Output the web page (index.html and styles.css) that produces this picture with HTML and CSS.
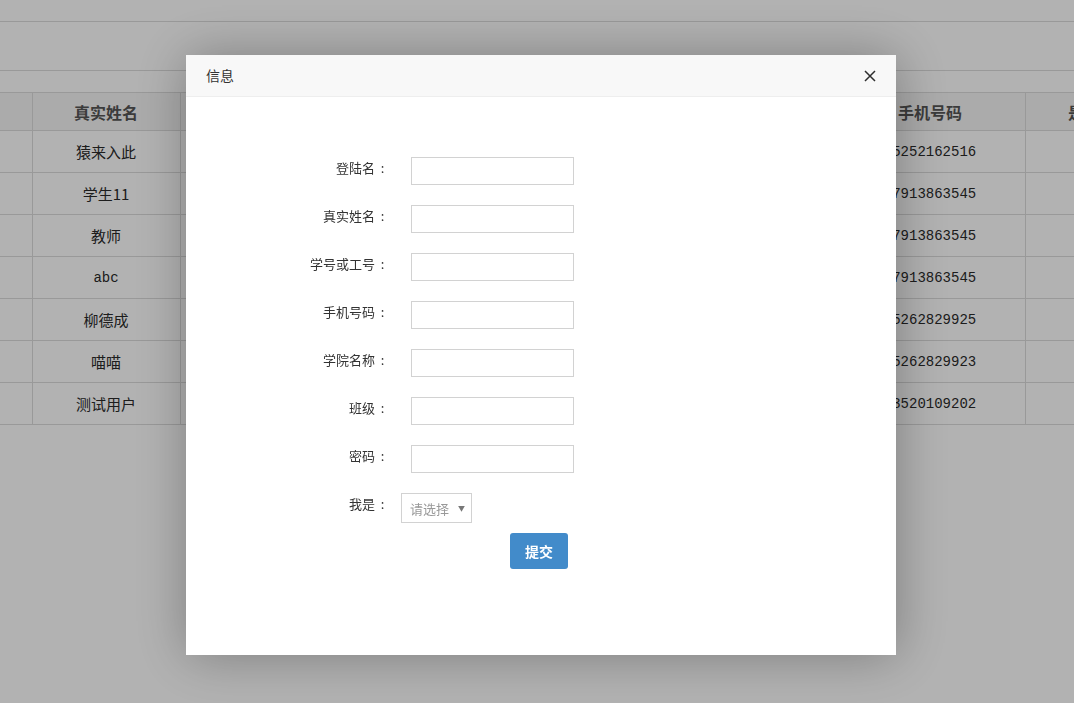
FILE: index.html
```html
<!DOCTYPE html>
<html lang="zh-CN">
<head>
<meta charset="utf-8">
<title>用户管理</title>
<link rel="stylesheet" href="styles.css">
</head>
<body>
<div class="page">
  <div class="topbar"></div>
  <div class="toolbar"></div>
  <table class="grid">
    <colgroup>
      <col class="c1"><col class="c2"><col class="c3"><col class="c4"><col class="c5"><col class="c6"><col class="c7">
    </colgroup>
    <thead>
      <tr><th></th><th>真实姓名</th><th>学号/工号</th><th>学院</th><th>班级</th><th>手机号码</th><th>是否审核</th></tr>
    </thead>
    <tbody>
      <tr><td></td><td>猿来入此</td><td class="num">2017001</td><td>计算机学院</td><td>111</td><td class="num">15252162516</td><td></td></tr>
      <tr><td></td><td>学生11</td><td class="num">2017002</td><td>计算机学院</td><td>111</td><td class="num">17913863545</td><td></td></tr>
      <tr><td></td><td>教师</td><td class="num">2017003</td><td>计算机学院</td><td>111</td><td class="num">17913863545</td><td></td></tr>
      <tr><td></td><td class="num">abc</td><td class="num">2017004</td><td>计算机学院</td><td>111</td><td class="num">17913863545</td><td></td></tr>
      <tr><td></td><td>柳德成</td><td class="num">2017005</td><td>计算机学院</td><td>111</td><td class="num">15262829925</td><td></td></tr>
      <tr><td></td><td>喵喵</td><td class="num">2017006</td><td>计算机学院</td><td>111</td><td class="num">15262829923</td><td></td></tr>
      <tr><td></td><td>测试用户</td><td class="num">2017007</td><td>计算机学院</td><td>111</td><td class="num">13520109202</td><td></td></tr>
    </tbody>
  </table>
</div>

<div class="shade"></div>

<div class="layer">
  <div class="layer-title">
    <span>信息</span>
    <svg class="close" width="12" height="12" viewBox="0 0 12 12" aria-hidden="true">
      <path d="M1 1 L11 11 M11 1 L1 11" stroke="#2e2e2e" stroke-width="1.5" fill="none"/>
    </svg>
  </div>
  <div class="layer-body">
    <form class="form">
      <div class="row"><label class="lbl">登陆名<span class="colon">:</span></label><input class="inp" type="text"></div>
      <div class="row"><label class="lbl">真实姓名<span class="colon">:</span></label><input class="inp" type="text"></div>
      <div class="row"><label class="lbl">学号或工号<span class="colon">:</span></label><input class="inp" type="text"></div>
      <div class="row"><label class="lbl">手机号码<span class="colon">:</span></label><input class="inp" type="text"></div>
      <div class="row"><label class="lbl">学院名称<span class="colon">:</span></label><input class="inp" type="text"></div>
      <div class="row"><label class="lbl">班级<span class="colon">:</span></label><input class="inp" type="text"></div>
      <div class="row"><label class="lbl">密码<span class="colon">:</span></label><input class="inp" type="password"></div>
      <div class="row row-sel">
        <label class="lbl">我是<span class="colon">:</span></label>
        <div class="sel"><span class="sel-text">请选择</span><span class="sel-arrow">▼</span></div>
      </div>
      <div class="actions"><button type="button" class="btn">提交</button></div>
    </form>
  </div>
</div>
</body>
</html>
```

FILE: styles.css
```css
html, body {
  margin: 0;
  padding: 0;
  width: 1074px;
  height: 703px;
  overflow: hidden;
  background: #ffffff;
  font-family: "Noto Sans CJK SC", "Noto Sans", sans-serif;
}

.page {
  width: 1074px;
}

.topbar {
  height: 21px;
  border-bottom: 1px solid #dbdbdb;
}

.toolbar {
  height: 48px;
  border-bottom: 1px solid #dbdbdb;
  margin-bottom: 21px;
}

.grid {
  border-collapse: collapse;
  table-layout: fixed;
  width: 1175px;
}

.grid .c1 { width: 32px; }
.grid .c2 { width: 148px; }
.grid .c3 { width: 176px; }
.grid .c4 { width: 324px; }
.grid .c5 { width: 155px; }
.grid .c6 { width: 190px; }
.grid .c7 { width: 150px; }

.grid th,
.grid td {
  border: 1px solid #dbdbdb;
  text-align: center;
  padding: 0;
  white-space: nowrap;
  overflow: hidden;
}

.grid th:first-child,
.grid td:first-child {
  border-left: none;
}

.grid th {
  height: 37px;
  background: #f5f5f5;
  color: #555555;
  font-size: 16px;
  font-weight: bold;
}

.grid td {
  height: 41px;
  color: #2a2a2a;
  font-size: 15px;
}

.grid td.num {
  font-family: "Liberation Mono", "Noto Sans CJK SC", monospace;
  font-size: 14px;
}

.shade {
  position: fixed;
  inset: 0;
  background: rgba(0, 0, 0, 0.3);
}

.layer {
  position: fixed;
  left: 186px;
  top: 55px;
  width: 710px;
  height: 600px;
  background: #ffffff;
  box-shadow: 1px 1px 50px rgba(0, 0, 0, 0.3);
  display: flex;
  flex-direction: column;
}

.layer-title {
  height: 41px;
  line-height: 41px;
  padding: 0 80px 0 20px;
  background: #f8f8f8;
  border-bottom: 1px solid #eeeeee;
  color: #333333;
  font-size: 14px;
  position: relative;
}

.close {
  position: absolute;
  right: 20px;
  top: 15px;
}

.layer-body {
  flex: 1;
  padding-top: 60px;
}

.form {
  display: flex;
  flex-direction: column;
}

.row {
  display: flex;
  align-items: flex-start;
  height: 28px;
  margin-bottom: 20px;
}

.lbl {
  width: 204px;
  text-align: right;
  font-size: 13px;
  line-height: 20px;
  padding-top: 1px;
  color: #333333;
  flex: none;
}

.colon {
  display: inline-block;
  width: 15px;
  text-align: center;
}

.inp {
  margin: 0 0 0 21px;
  width: 163px;
  height: 28px;
  box-sizing: border-box;
  border: 1px solid #d2d2d2;
  background: #ffffff;
  padding: 0 6px;
  outline: none;
}

.row-sel {
  height: 30px;
  margin-bottom: 10px;
}

.sel {
  margin-left: 11px;
  width: 71px;
  height: 30px;
  box-sizing: border-box;
  border: 1px solid #d2d2d2;
  display: flex;
  align-items: center;
  padding-left: 8px;
  color: #999999;
  font-size: 13px;
}

.sel-text {
  line-height: 20px;
  padding-top: 2px;
}

.sel-arrow {
  font-size: 7px;
  color: #777777;
  margin-left: 9px;
}

.actions {
  display: flex;
  justify-content: flex-start;
  padding-left: 324px;
}

.btn {
  width: 58px;
  height: 36px;
  border: none;
  border-radius: 3px;
  background: #428bca;
  color: #ffffff;
  font-family: "Noto Sans CJK SC", sans-serif;
  font-size: 14px;
  font-weight: bold;
  padding: 0;
}
```
